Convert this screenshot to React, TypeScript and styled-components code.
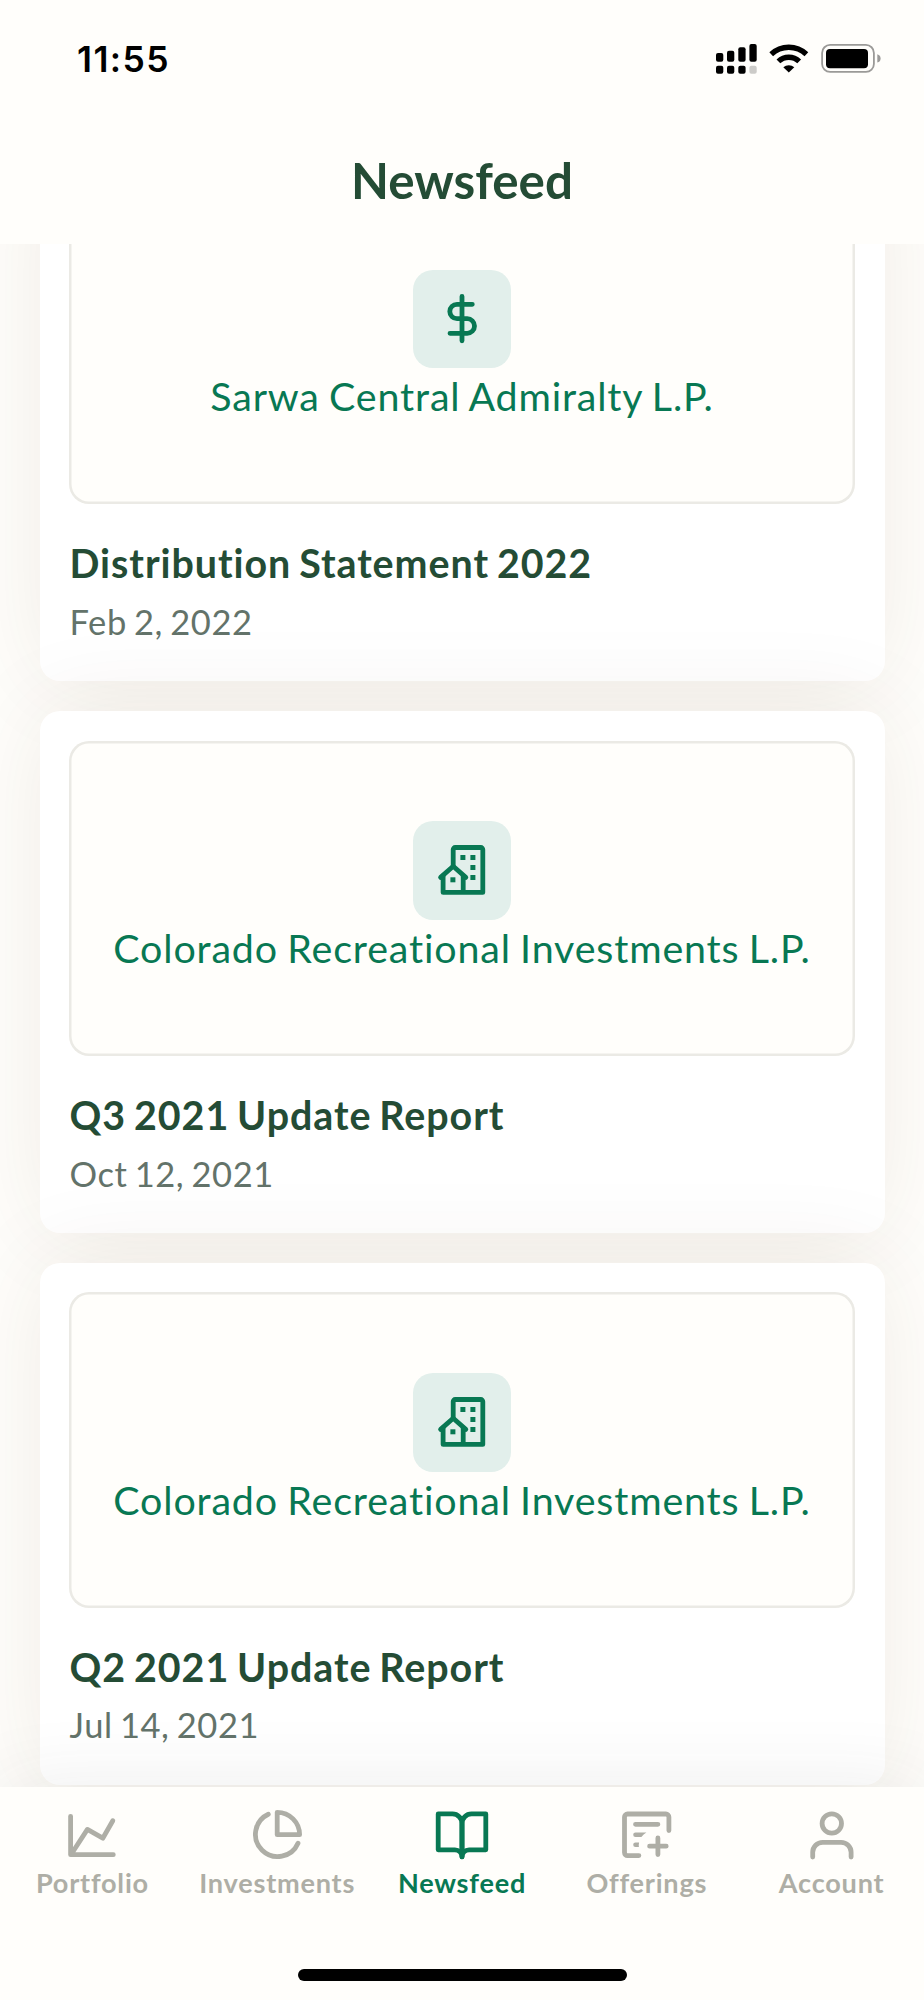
import React from "react";
import styled, { createGlobalStyle } from "styled-components";

const color = {
  page: "#fffefb",
  ink: "#244c35",
  green: "#087853",
  tile: "#e2efeb",
  muted: "#63736a",
  idle: "#aeaea6",
  line: "#ebeae5",
};

const GlobalStyle = createGlobalStyle`
  * { box-sizing: border-box; }
  html, body { margin: 0; padding: 0; background: ${color.page}; }
  body { font-family: Lato, "Liberation Sans", sans-serif; }
`;

const Screen = styled.div`
  display: flex;
  flex-direction: column;
  width: 924px;
  height: 2000px;
  overflow: hidden;
  background: ${color.page};
`;

const Header = styled.header`
  flex: none;
  height: 244px;
  background: ${color.page};
`;

const StatusBar = styled.div`
  display: flex;
  justify-content: space-between;
  padding: 37px 40px 0 77px;
  height: 118px;
`;

const Clock = styled.span`
  padding-top: 1px;
  font: 600 35.5px/44px Inter, sans-serif;
  letter-spacing: 1.4px;
  color: #000;
`;

const StatusIcons = styled.svg`
  display: block;
  width: 170px;
  height: 40px;
`;

const Title = styled.h1`
  margin: 0;
  padding-top: 32px;
  text-align: center;
  font-size: 49.3px;
  line-height: 60px;
  font-weight: 700;
  color: ${color.ink};
`;

const Feed = styled.main`
  flex: 1;
  min-height: 0;
  display: flex;
  flex-direction: column;
  justify-content: flex-end;
  gap: 29.6px;
  padding: 0 39.5px 1.8px;
  overflow: hidden;
`;

const Card = styled.article`
  flex: none;
  height: 522.3px;
  padding: 29.5px;
  border-radius: 20px;
  background: #fff;
  box-shadow: 0 0 96px rgba(80, 52, 28, 0.085);
`;

const Preview = styled.div`
  display: flex;
  flex-direction: column;
  align-items: center;
  justify-content: center;
  height: 315.4px;
  border-radius: 20px;
  background: ${color.page};
  box-shadow: inset 0 0 0 2.5px ${color.line};
`;

const Tile = styled.div`
  width: 98.5px;
  height: 98.5px;
  border-radius: 20px;
  background: ${color.tile};
`;

const Glyph = styled.svg`
  display: block;
  width: 100%;
  height: 100%;
  fill: none;
  stroke: ${color.green};
  stroke-width: 4.8;
  stroke-linecap: round;
  stroke-linejoin: round;
`;

const Company = styled.div`
  font-size: 39.4px;
  line-height: 55px;
  letter-spacing: 0.84px;
  word-spacing: -1.6px;
  white-space: nowrap;
  color: ${color.green};
`;

const Headline = styled.h2`
  margin: 31px 0 0 0.5px;
  font-size: 39.4px;
  line-height: 55px;
  font-weight: 700;
  letter-spacing: 0.95px;
  word-spacing: -2.6px;
  color: ${color.ink};
`;

const Posted = styled.div`
  margin: 7.7px 0 0 0.5px;
  font-size: 34.5px;
  line-height: 48px;
  letter-spacing: 0.58px;
  word-spacing: -2.2px;
  color: ${color.muted};
`;

const Footer = styled.footer`
  position: relative;
  flex: none;
  display: flex;
  flex-direction: column;
  align-items: center;
  justify-content: space-between;
  height: 213px;
  padding: 19px 0 19.5px;
  background: ${color.page};
  box-shadow: 0 0 80px rgba(60, 60, 50, 0.09);
`;

const Tabs = styled.nav`
  display: grid;
  grid-template-columns: repeat(5, 1fr);
  width: 100%;
`;

const Tab = styled.div<{ $active?: boolean }>`
  display: flex;
  flex-direction: column;
  align-items: center;
  color: ${(p) => (p.$active ? color.green : color.idle)};
`;

const TabIcon = styled.svg`
  display: block;
  width: 60px;
  height: 60px;
  fill: none;
  stroke: currentColor;
  stroke-width: 4.8;
  stroke-linecap: round;
  stroke-linejoin: round;
`;

const TabLabel = styled.span`
  font-size: 27.1px;
  line-height: 33px;
  font-weight: 700;
  letter-spacing: 0.78px;
`;

const HomeIndicator = styled.div`
  width: 329px;
  height: 11.5px;
  border-radius: 6px;
  background: #000;
`;

const DollarIcon = () => (
  <Glyph viewBox="0 0 98.5 98.5">
    <path d="M49 26.4V70.8M59.3 34.3H44a7.2 7.2 0 0 0 0 14.4H54.2a7.3 7.3 0 0 1 0 14.6H37" />
  </Glyph>
);

const BuildingIcon = () => (
  <Glyph viewBox="0 0 98.5 98.5">
    <path d="M40.2 45V28.5a2 2 0 0 1 2-2H67.8a2 2 0 0 1 2 2V71.4H30.1V55M50.2 55V71.4" />
    <path d="M27.6 56.4L40.2 45.2L52.8 56.4" />
    <g fill={color.green} stroke="none">
      <rect x="47.4" y="34" width="5" height="5" />
      <rect x="57.4" y="34" width="5" height="5" />
      <rect x="57.4" y="44" width="5" height="5" />
      <rect x="57.4" y="54" width="5" height="5" />
      <rect x="37.4" y="56.3" width="5" height="5" />
    </g>
  </Glyph>
);

const ChartIcon = () => (
  <TabIcon viewBox="0 0 60 60">
    <path d="M8.6 10.3V48.7H51.3M9.4 48L25.4 23.4L40.8 32.2L50.8 14.7" />
  </TabIcon>
);

const PieIcon = () => (
  <TabIcon viewBox="0 0 60 60">
    <path d="M21.3 8.2A22.2 22.2 0 1 0 51 37.2" />
    <path d="M30.2 6.3V28.7H52.6A22.4 22.4 0 0 0 30.2 6.3Z" />
  </TabIcon>
);

const BookIcon = () => (
  <TabIcon viewBox="0 0 60 60">
    <path d="M6.2 7.9H20.5A9.5 9.5 0 0 1 30 17.4V50.9A7.1 7.1 0 0 0 22.9 43.8H6.2Z" />
    <path d="M53.8 7.9H39.5A9.5 9.5 0 0 0 30 17.4V50.9A7.1 7.1 0 0 1 37.1 43.8H53.8Z" />
  </TabIcon>
);

const OfferIcon = () => (
  <TabIcon viewBox="0 0 60 60">
    <path d="M21.9 49.6H10.5a3 3 0 0 1-3-3V11a3 3 0 0 1 3-3H48.9a3 3 0 0 1 3 3V24.6M18.5 18.3H40.9M32.6 40.2H49.2M40.9 31.9V48.5" />
    <g fill="currentColor" stroke="none">
      <path d="M18.5 26.4H29.4Q26.4 28 24.4 31H18.5a2.3 2.3 0 0 1 0-4.6Z" />
      <path d="M18.5 36.4H22.1Q21.5 38.8 21.9 41H18.5a2.3 2.3 0 0 1 0-4.6Z" />
    </g>
  </TabIcon>
);

const PersonIcon = () => (
  <TabIcon viewBox="0 0 60 60">
    <circle cx="29.8" cy="17.5" r="9.7" />
    <path d="M10.7 51V46.3a10 10 0 0 1 10-10H39.1a10 10 0 0 1 10 10V51" />
  </TabIcon>
);

const posts = [
  { company: "Sarwa Central Admiralty L.P.", title: "Distribution Statement 2022", date: "Feb 2, 2022", Icon: DollarIcon },
  { company: "Colorado Recreational Investments L.P.", title: "Q3 2021 Update Report", date: "Oct 12, 2021", Icon: BuildingIcon },
  { company: "Colorado Recreational Investments L.P.", title: "Q2 2021 Update Report", date: "Jul 14, 2021", Icon: BuildingIcon },
];

const tabs = [
  { label: "Portfolio", Icon: ChartIcon },
  { label: "Investments", Icon: PieIcon },
  { label: "Newsfeed", Icon: BookIcon, active: true },
  { label: "Offerings", Icon: OfferIcon },
  { label: "Account", Icon: PersonIcon },
];

export default function App() {
  return (
    <>
      <GlobalStyle />
      <Screen>
        <Header>
          <StatusBar>
            <Clock>11:55</Clock>
            <StatusIcons viewBox="714 37 170 40">
              <rect x="716" y="53" width="7.3" height="8.7" rx="2" />
              <rect x="727" y="50.7" width="7.3" height="11" rx="2" />
              <rect x="738.3" y="47.3" width="7.3" height="14.4" rx="2" />
              <rect x="749.4" y="44" width="7.3" height="17.7" rx="2" />
              <rect x="716" y="65.7" width="7.3" height="8" rx="2" />
              <rect x="727" y="65.7" width="7.3" height="8" rx="2" />
              <rect x="738.3" y="65.7" width="7.3" height="8" rx="2" />
              <rect x="749.4" y="65.7" width="7.3" height="8" rx="2" fill="#cccbc8" />
              <g fill="none" stroke="#000" strokeWidth="5.4">
                <path d="M771.2 54.2A25.6 25.6 0 0 1 806.4 54.2" />
                <path d="M778.4 61.4A15 15 0 0 1 799.2 61.4" />
              </g>
              <path d="M783.3 67.2A8.4 8.4 0 0 1 794.3 67.2L788.8 72.4Z" />
              <rect x="822.1" y="44.9" width="51.8" height="27" rx="8" fill="none" stroke="#9b9a98" strokeWidth="1.8" />
              <rect x="826" y="49" width="42" height="19.2" rx="4" />
              <path d="M877.3 54.2Q880.6 55.2 880.6 58.4T877.3 62.6Z" fill="#9b9a98" />
            </StatusIcons>
          </StatusBar>
          <Title>Newsfeed</Title>
        </Header>
        <Feed>
          {posts.map(({ company, title, date, Icon }) => (
            <Card key={title}>
              <Preview>
                <Tile>
                  <Icon />
                </Tile>
                <Company>{company}</Company>
              </Preview>
              <Headline>{title}</Headline>
              <Posted>{date}</Posted>
            </Card>
          ))}
        </Feed>
        <Footer>
          <Tabs>
            {tabs.map(({ label, Icon, active }) => (
              <Tab key={label} $active={active}>
                <Icon />
                <TabLabel>{label}</TabLabel>
              </Tab>
            ))}
          </Tabs>
          <HomeIndicator />
        </Footer>
      </Screen>
    </>
  );
}
